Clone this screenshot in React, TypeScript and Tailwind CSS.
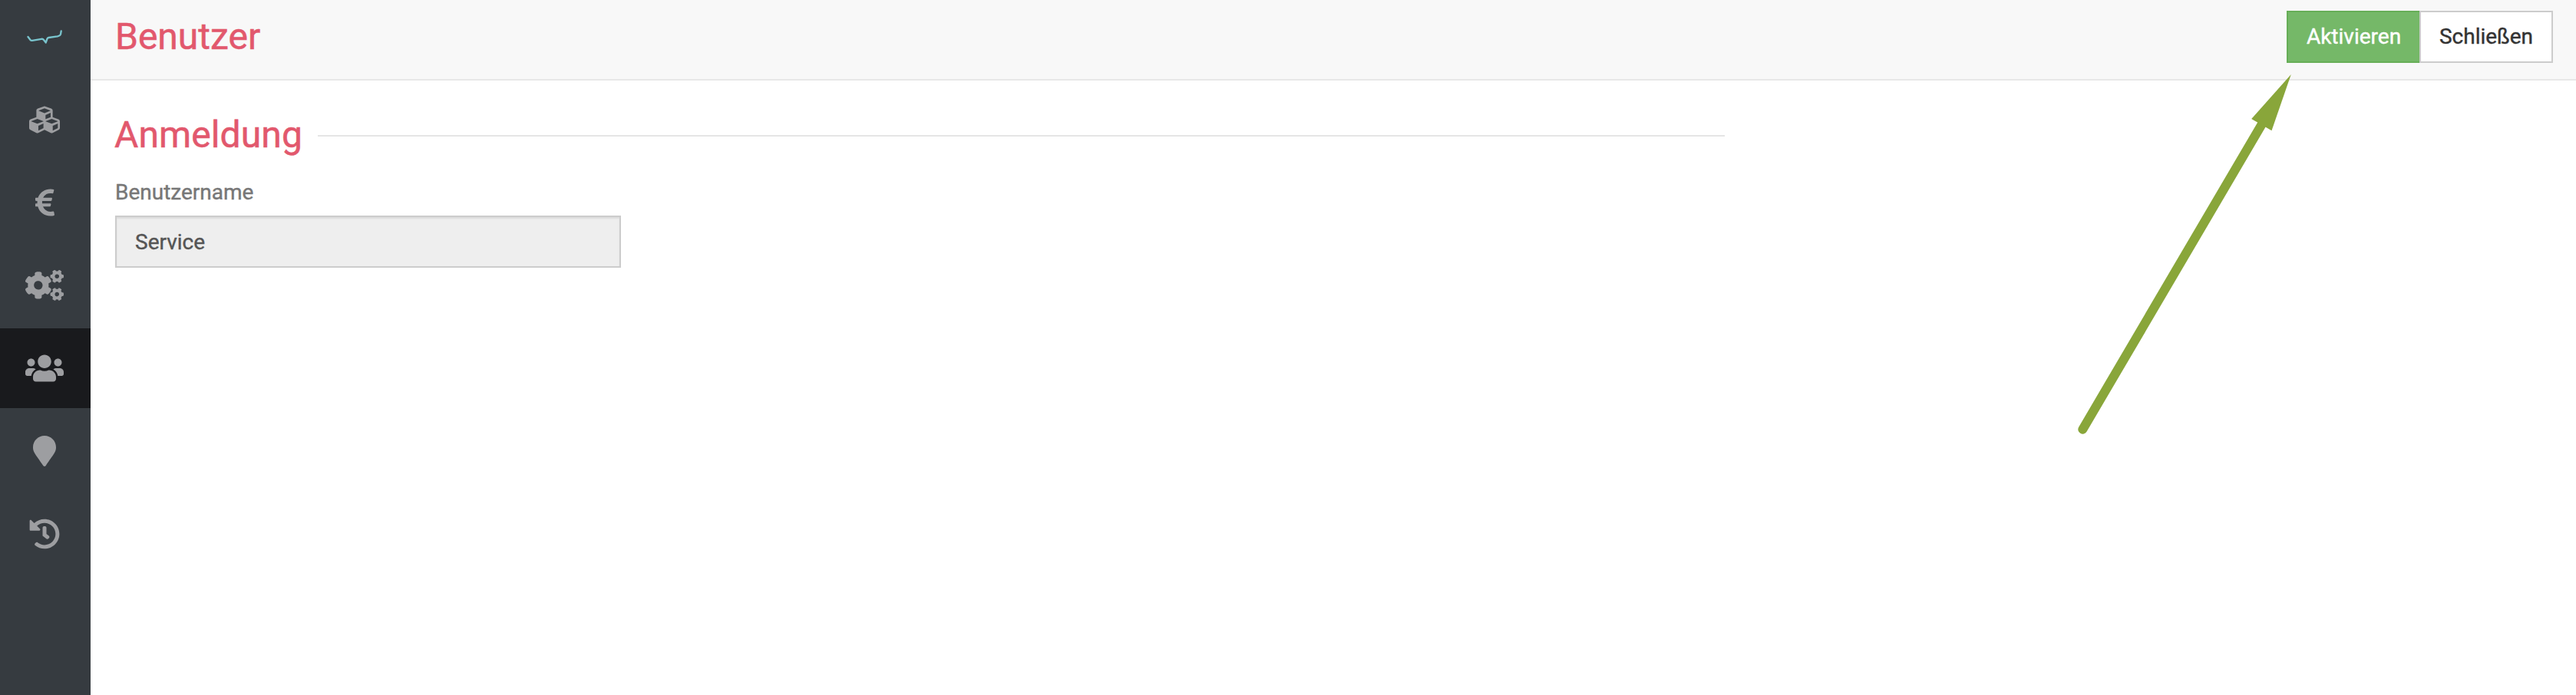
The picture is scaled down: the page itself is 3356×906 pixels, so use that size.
import type { ComponentType } from "react";
import { FaCogs, FaCubes, FaEuroSign, FaHistory, FaMapMarker, FaUsers } from "react-icons/fa";

type NavItem = { label: string; icon: ComponentType<{ className?: string }>; size: string; active?: boolean };

const navItems: NavItem[] = [
  { label: "Produkte", icon: FaCubes, size: "h-[40px] w-[40px]" },
  { label: "Finanzen", icon: FaEuroSign, size: "h-[40px] w-[25px]" },
  { label: "Einstellungen", icon: FaCogs, size: "h-[40px] w-[50px]" },
  { label: "Benutzer", icon: FaUsers, size: "h-[40px] w-[50px]", active: true },
  { label: "Standorte", icon: FaMapMarker, size: "h-[40px] w-[30px]" },
  { label: "Verlauf", icon: FaHistory, size: "h-[40px] w-[40px]" },
];

function Sidebar() {
  return (
    <aside className="flex w-[118px] shrink-0 flex-col bg-[#363b40]">
      <div className="flex h-[104px] justify-center pt-[38px]">
        <svg
          className="h-[20px] w-[48px]"
          viewBox="0 0 48 20"
          fill="none"
          stroke="#79c4cd"
          strokeWidth="2.3"
          strokeLinecap="round"
          strokeLinejoin="round"
        >
          <path d="M1.500 10 4.500 14Q5.300 15 7 14.800L19 12.800Q21 12.500 22 14L24.700 17.500 26.500 12.500Q27 11.300 28.500 11L40 9.300Q43.500 8.500 44 6.500L44.700 2.500" />
        </svg>
      </div>
      <nav className="flex flex-col gap-1">
        {navItems.map(({ label, icon: Icon, size, active }) => (
          <a
            key={label}
            href="#"
            aria-label={label}
            className={`flex h-[104px] items-center justify-center pr-[2px] text-[#9d9ea1] ${active ? "bg-[#191a1d]" : ""}`}
          >
            <Icon className={size} />
          </a>
        ))}
      </nav>
    </aside>
  );
}

function Header() {
  return (
    <header className="flex h-[105px] justify-between border-b-2 border-[#e7e7e7] bg-[#f8f8f8] pr-[30px] pl-8">
      <h1 className="pt-[19px] text-[48px] leading-[58px] text-[#e2586d] [-webkit-text-stroke:0.5px_#e2586d]">Benutzer</h1>
      <div className="flex pt-[14px] text-[28px] leading-[40px]">
        <button className="flex h-[68px] w-[173px] items-center justify-center border-2 border-r-0 border-[#67ae57] bg-[#75b868] text-white [-webkit-text-stroke:0.4px_white]">
          Aktivieren
        </button>
        <button className="flex h-[68px] w-[174px] items-center justify-center border-2 border-[#cccccc] bg-white text-[#333333] [-webkit-text-stroke:0.4px_#333333]">
          Schließen
        </button>
      </div>
    </header>
  );
}

function LoginForm() {
  return (
    <section className="flex w-[2129px] flex-col pl-8">
      <div className="flex items-center">
        <h2 className="-mt-px -ml-px w-[265px] text-[48px] leading-[58px] tracking-[0.1px] text-[#e2586d] [-webkit-text-stroke:0.5px_#e2586d]">
          Anmeldung
        </h2>
        <div className="mt-px h-[2px] grow bg-[#e5e5e5]" />
      </div>
      <label
        htmlFor="username"
        className="mt-[26px] text-[28px] leading-[40px] text-[#777777] [-webkit-text-stroke:0.4px_#777777]"
      >
        Benutzername
      </label>
      <input
        id="username"
        readOnly
        defaultValue="Service"
        className="mt-[10px] h-[68px] w-[659px] border-2 border-[#cccccc] bg-[#eeeeee] px-6 text-[28px] text-[#555555] shadow-[inset_0_2px_2px_rgba(0,0,0,0.075)] outline-none [-webkit-text-stroke:0.4px_#555555]"
      />
    </section>
  );
}

export default function App() {
  return (
    <div className="relative flex h-[906px] w-[3356px] overflow-hidden bg-white font-[Roboto,sans-serif]">
      <Sidebar />
      <main className="flex grow flex-col gap-[43px]">
        <Header />
        <LoginForm />
      </main>
      <svg className="pointer-events-none absolute top-[90px] left-[2700px] h-[480px] w-[290px]" viewBox="2700 90 290 480">
        <path d="M2713.300 559.700 2947 161.500" stroke="#89a63a" strokeWidth="12" strokeLinecap="round" />
        <path d="M2984.800 97 2933.200 155 2959.500 170.300Z" fill="#89a63a" />
      </svg>
    </div>
  );
}
